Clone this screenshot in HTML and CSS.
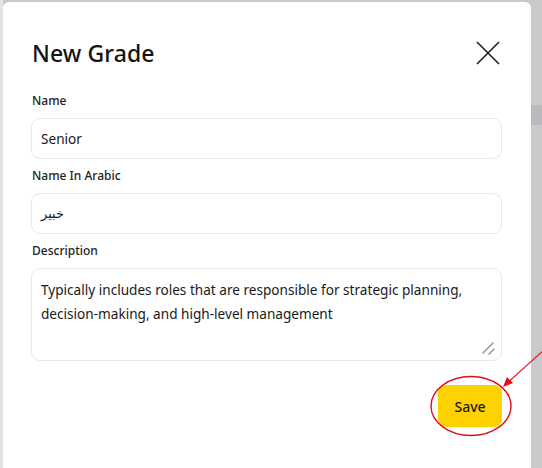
FILE: index.html
```html
<!DOCTYPE html>
<html>
<head>
<meta charset="utf-8">
<link rel="stylesheet" href="styles.css">
</head>
<body>
<div class="modal">
  <div class="header">
    <h2 class="title">New Grade</h2>
    <button class="close" aria-label="Close">
      <svg width="24" height="24" viewBox="0 0 24 24"><path d="M1 1 L23 23 M23 1 L1 23" stroke="#1f1f1f" stroke-width="1.6" fill="none"/></svg>
    </button>
  </div>
  <form class="form">
    <label class="label">Name</label>
    <div class="input">Senior</div>
    <label class="label">Name In Arabic</label>
    <div class="input arabic">خبير</div>
    <label class="label">Description</label>
    <div class="textarea">Typically includes roles that are responsible for strategic planning, decision-making, and high-level management
      <svg class="grip" width="14" height="14" viewBox="0 0 14 14"><path d="M2 12 L12 2 M8 13 L13 8" stroke="#9a9a9a" stroke-width="1.6" stroke-linecap="round"/></svg>
    </div>
    <div class="actions">
      <button class="save" type="button">Save</button>
    </div>
  </form>
  <svg class="annot" width="120" height="100" viewBox="0 0 120 100">
    <ellipse cx="49" cy="64" rx="40" ry="29.5" fill="none" stroke="#e0111b" stroke-width="1.4"/>
    <path d="M122 8 L83 43" stroke="#e0111b" stroke-width="1.2"/>
    <path d="M81 45 L85 35 L91 41 Z" fill="#e0111b"/>
  </svg>
</div>
</body>
</html>
```
FILE: styles.css
```css
html, body {
  margin: 0;
  padding: 0;
  height: 100%;
}
body {
  background:
    linear-gradient(to bottom, transparent 105px, #b9babd 105px, #b9babd 125px, transparent 125px) right top / 11px 100% no-repeat,
    linear-gradient(to right, #e3e3e3 0 3px, #c9c9c9 3px);
  font-family: "Noto Sans", "Open Sans", sans-serif;
  color: #1c1c1c;
  overflow: hidden;
}
.modal {
  position: relative;
  margin: 2px 0 0 3px;
  width: 528px;
  height: 466px;
  background: #fff;
  border-radius: 6px 6px 0 0;
  box-sizing: border-box;
  padding: 0 29px 0 28px;
}
.header {
  display: flex;
  align-items: center;
  justify-content: space-between;
  padding-top: 35px;
  height: 32px;
  margin-bottom: 24px;
}
.title {
  margin: 0 0 0 1px;
  font-size: 23px;
  font-weight: 500;
  color: #141414;
  letter-spacing: 0.1px;
}
.close {
  background: none;
  border: 0;
  padding: 0;
  margin-right: 2px;
  width: 24px;
  height: 24px;
  display: flex;
}
.form {
  display: flex;
  flex-direction: column;
}
.label {
  font-size: 12px;
  font-weight: 500;
  color: #222;
  line-height: 16px;
  margin: 0 0 0 1px;
  height: 16px;
}
.input {
  margin-top: 9px;
  margin-bottom: 9px;
  height: 41px;
  box-sizing: border-box;
  border: 1px solid #e6e8eb;
  border-radius: 9px;
  padding: 0 9px;
  display: flex;
  align-items: center;
  font-size: 13.6px;
  color: #1a1a1a;
}
.arabic {
  font-family: "DejaVu Sans", "Noto Sans", sans-serif;
  font-size: 13px;
}
.textarea {
  position: relative;
  margin-top: 9px;
  height: 93px;
  box-sizing: border-box;
  border: 1px solid #e6e8eb;
  border-radius: 9px;
  padding: 9px 9px;
  font-size: 13.6px;
  line-height: 24px;
  color: #1a1a1a;
}
.grip {
  position: absolute;
  right: 6px;
  bottom: 5px;
}
.actions {
  display: flex;
  justify-content: flex-end;
  margin-top: 24px;
}
.save {
  width: 64px;
  height: 42px;
  border: 0;
  border-radius: 8px;
  background: #fdd200;
  font-family: "Noto Sans", sans-serif;
  font-size: 14px;
  font-weight: 500;
  color: #1a1a1a;
  padding: 0;
}
.annot {
  position: absolute;
  left: 419px;
  top: 340px;
  overflow: visible;
}
```
